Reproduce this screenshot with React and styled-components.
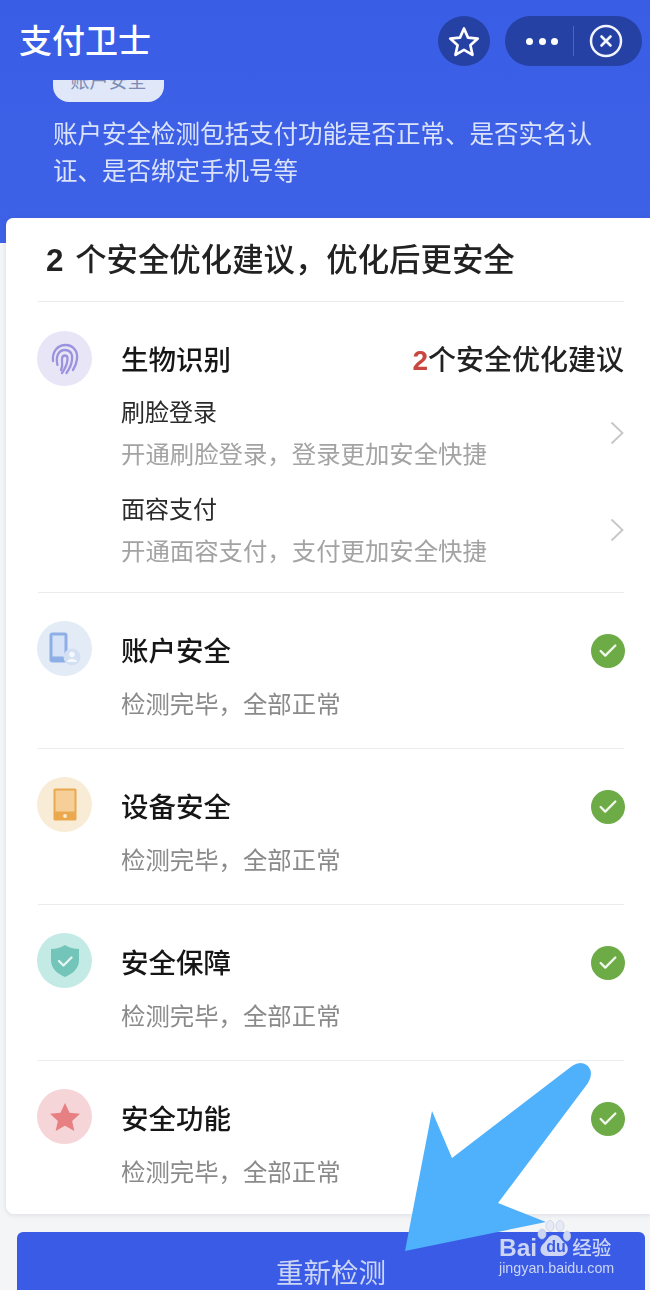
import React from "react";
import styled, { createGlobalStyle } from "styled-components";
import { Check } from "lucide-react";

const GlobalStyle = createGlobalStyle`
  html, body {
    margin: 0;
    padding: 0;
    background: #f4f5f7;
  }
  * {
    box-sizing: border-box;
  }
`;

const okRows = [
  { title: "账户安全", tone: "#e3ebf6", icon: <PhoneUserIcon /> },
  { title: "设备安全", tone: "#f8ecd6", icon: <TabletIcon /> },
  { title: "安全保障", tone: "#c3eae4", icon: <ShieldIcon /> },
  { title: "安全功能", tone: "#f5d5d8", icon: <StarBadgeIcon /> },
];

const suggestions = [
  { name: "刷脸登录", hint: "开通刷脸登录，登录更加安全快捷" },
  { name: "面容支付", hint: "开通面容支付，支付更加安全快捷" },
];

export default function App() {
  return (
    <Page>
      <GlobalStyle />
      <Screen>
        <Hero>
          <TopBar>
            <AppTitle>支付卫士</AppTitle>
            <NavActions>
              <FavButton>
                <svg width="32" height="31" viewBox="0 0 32 31">
                  <path
                    d="M16 2.5 L20 11.6 L29.8 12.6 L22.4 19.2 L24.5 28.8 L16 23.8 L7.5 28.8 L9.6 19.2 L2.2 12.6 L12 11.6 Z"
                    fill="none"
                    stroke="#fff"
                    strokeWidth="2.7"
                    strokeLinejoin="round"
                  />
                </svg>
              </FavButton>
              <Capsule>
                <Dots>
                  <i />
                  <i />
                  <i />
                </Dots>
                <CapsuleLine />
                <svg width="34" height="34" viewBox="0 0 34 34">
                  <circle cx="17" cy="17" r="15" fill="none" stroke="#f2f4ff" strokeWidth="2.5" />
                  <path d="M12.5 12.5 L21.5 21.5 M21.5 12.5 L12.5 21.5" stroke="#f2f4ff" strokeWidth="2.6" strokeLinecap="round" />
                </svg>
              </Capsule>
            </NavActions>
          </TopBar>
          <TagClip>
            <Tag>账户安全</Tag>
          </TagClip>
          <Intro>账户安全检测包括支付功能是否正常、是否实名认证、是否绑定手机号等</Intro>
        </Hero>

        <Card>
          <Heading>
            <b>2</b> 个安全优化建议，优化后更安全
          </Heading>

          <BioSection>
            <IconCircle $tone="#e8e6f6">
              <FingerprintIcon />
            </IconCircle>
            <div>
              <BioHead>
                <RowTitle>生物识别</RowTitle>
                <Count>
                  <em>2</em>个安全优化建议
                </Count>
              </BioHead>
              <Suggestions>
                {suggestions.map((s) => (
                  <Suggestion key={s.name}>
                    <div>
                      <SuggestionName>{s.name}</SuggestionName>
                      <Hint>{s.hint}</Hint>
                    </div>
                    <svg width="14" height="24" viewBox="0 0 14 24">
                      <path d="M1.5 1.5 L12.5 12 L1.5 22.5" fill="none" stroke="#c6c6c6" strokeWidth="1.8" />
                    </svg>
                  </Suggestion>
                ))}
              </Suggestions>
            </div>
          </BioSection>

          {okRows.map((row) => (
            <CheckRow key={row.title}>
              <IconCircle $tone={row.tone}>{row.icon}</IconCircle>
              <RowBody>
                <RowHead>
                  <RowTitle>{row.title}</RowTitle>
                  <OkMark>
                    <Check size={22} strokeWidth={2.6} color="#f2f7ec" />
                  </OkMark>
                </RowHead>
                <Hint $dark>检测完毕，全部正常</Hint>
              </RowBody>
            </CheckRow>
          ))}
        </Card>

        <RetryButton>重新检测</RetryButton>
      </Screen>

      <Arrow viewBox="0 0 650 1290">
        <path
          d="M405 1251 L432 1111 L452 1158 L572 1066 Q581 1060 588 1066 Q594 1073 588 1083 L498 1203 L546 1222 Z"
          fill="#4fb0fb"
        />
      </Arrow>

      <Watermark>
        <LogoLine>
          <LogoBai>Bai</LogoBai>
          <Paw>
            <svg width="34" height="38" viewBox="0 0 34 38">
              <g fill="#e6eaf7" stroke="#c9cdda" strokeWidth="0.7">
                <ellipse cx="5" cy="15" rx="4" ry="5" fill="#ccd5f3" />
                <ellipse cx="13" cy="7" rx="4" ry="5.5" />
                <ellipse cx="23" cy="7" rx="4" ry="5.5" />
                <ellipse cx="30" cy="17" rx="3.6" ry="5" fill="#ccd5f3" />
              </g>
              <path
                d="M17 16 C23 16 24 21 29 25 C33 30 30 37 24 37 L10 37 C4 37 1 30 6 25 C10 22 11 16 17 16 Z"
                fill="#ccd5f3"
              />
            </svg>
            <PawText>du</PawText>
          </Paw>
          <LogoCn>经验</LogoCn>
        </LogoLine>
        <LogoUrl>jingyan.baidu.com</LogoUrl>
      </Watermark>
    </Page>
  );
}

function FingerprintIcon() {
  return (
    <svg width="30" height="32" viewBox="0 0 30 32" fill="none" stroke="#9c93de" strokeWidth="2.3" strokeLinecap="round">
      <path d="M3 18 C2 8 8 2 15.5 2 C23 2 28 8 27 16 C26.5 20 25 24 23 27" />
      <path d="M7.5 22 C5.5 14 8 7 15 7 C21 7 23 12 22 17 C21.5 21 20 25 16.5 30" />
      <path d="M11 27 C13.5 22 11.5 18 12 15.5 C12.5 11.5 17.5 11.5 17.5 15.5 C17.5 20 15.5 25 12 30" />
    </svg>
  );
}

function PhoneUserIcon() {
  return (
    <svg width="32" height="34" viewBox="0 0 32 34">
      <rect x="0.5" y="0.5" width="18" height="30" rx="3" fill="#8eaee6" />
      <rect x="3.5" y="3.5" width="12" height="21" fill="#d6e2f5" />
      <circle cx="23" cy="25" r="8.5" fill="#d3e0f3" />
      <circle cx="23" cy="22.5" r="2.8" fill="#f4f8fd" />
      <path d="M18 30 C18 25.5 28 25.5 28 30 Z" fill="#f4f8fd" />
    </svg>
  );
}

function TabletIcon() {
  return (
    <svg width="24" height="33" viewBox="0 0 24 33">
      <rect x="0.5" y="0.5" width="23" height="32" rx="1.5" fill="#eba94f" />
      <rect x="2.5" y="2.5" width="19" height="21" fill="#f5cf97" />
      <circle cx="12" cy="28" r="1.9" fill="#fbeed6" />
    </svg>
  );
}

function ShieldIcon() {
  return (
    <svg width="30" height="34" viewBox="0 0 30 34">
      <path d="M15 1 C19 3.5 24 5 29 5 L29 16 C29 25 22 30 15 33 C8 30 1 25 1 16 L1 5 C6 5 11 3.5 15 1 Z" fill="#74c5b9" />
      <path d="M9 17 L13.5 21.5 L21.5 13.5" fill="none" stroke="#e6f6f3" strokeWidth="2.3" strokeLinecap="round" strokeLinejoin="round" />
    </svg>
  );
}

function StarBadgeIcon() {
  return (
    <svg width="32" height="30" viewBox="0 0 34 32">
      <path d="M17 1 L21.8 11.4 L33 12.6 L24.6 20.2 L27 31 L17 25.4 L7 31 L9.4 20.2 L1 12.6 L12.2 11.4 Z" fill="#e68083" />
    </svg>
  );
}

const Page = styled.div`
  position: relative;
  width: 650px;
  height: 1290px;
  overflow: hidden;
  background: #f4f5f7;
  font-family: "Liberation Sans", "Noto Sans CJK SC", sans-serif;
`;

const Screen = styled.div`
  filter: blur(0.45px);
`;

const Hero = styled.header`
  height: 243px;
  margin-bottom: -25px;
  background: linear-gradient(180deg, #3a5de6 0%, #3e62e6 100%);
`;

const TopBar = styled.div`
  display: flex;
  align-items: center;
  justify-content: space-between;
  height: 80px;
  padding: 0 8px 0 19px;
`;

const AppTitle = styled.h1`
  margin: 2px 0 0;
  font-size: 33px;
  font-weight: 500;
  line-height: 1;
  color: #fff;
`;

const NavActions = styled.div`
  display: flex;
  align-items: center;
  gap: 15px;
  margin-top: 2px;
`;

const FavButton = styled.div`
  display: flex;
  align-items: center;
  justify-content: center;
  width: 52px;
  height: 50px;
  border-radius: 50%;
  background: #2541a3;
`;

const Capsule = styled.div`
  display: flex;
  align-items: center;
  width: 137px;
  height: 50px;
  padding-left: 21px;
  border-radius: 25px;
  background: #2541a3;
`;

const Dots = styled.div`
  display: flex;
  gap: 5.5px;

  i {
    width: 7px;
    height: 7px;
    border-radius: 50%;
    background: #fff;
  }
`;

const CapsuleLine = styled.div`
  width: 1px;
  height: 30px;
  margin: 0 15px;
  background: rgba(255, 255, 255, 0.2);
`;

const TagClip = styled.div`
  display: flex;
  align-items: flex-end;
  height: 22px;
  overflow: hidden;
  padding-left: 53px;
`;

const Tag = styled.div`
  flex: none;
  width: 111px;
  height: 38px;
  border-radius: 16px;
  background: #dfe7f8;
  font-size: 19px;
  line-height: 36px;
  text-align: center;
  color: #7d8cb5;
`;

const Intro = styled.p`
  width: 552px;
  margin: 14px 0 0 53px;
  font-size: 24.5px;
  line-height: 37px;
  color: #dbe3fb;
`;

const Card = styled.main`
  position: relative;
  margin-left: 6px;
  padding: 0 26px 0 32px;
  background: #fff;
  border-radius: 7px 0 0 8px;
  box-shadow: 0 1px 5px rgba(40, 50, 80, 0.12);
`;

const Heading = styled.h2`
  height: 84px;
  margin: 0;
  padding: 0 0 0 8px;
  border-bottom: 1px solid #ececee;
  font-size: 31.4px;
  font-weight: 500;
  line-height: 85px;
  word-spacing: 3px;
  color: #222;

  b {
    font-weight: 700;
  }
`;

const BioSection = styled.section`
  display: grid;
  grid-template-columns: 55px 1fr;
  column-gap: 29px;
  padding: 29px 0 24px;
  border-bottom: 1px solid #ececee;
`;

const IconCircle = styled.div`
  display: flex;
  align-items: center;
  justify-content: center;
  width: 55px;
  height: 55px;
  margin-left: -1px;
  border-radius: 50%;
  background: ${(p) => p.$tone};
`;

const BioHead = styled.div`
  display: flex;
  align-items: center;
  justify-content: space-between;
  height: 56px;
  padding-top: 1px;
`;

const RowTitle = styled.div`
  height: 36px;
  margin-left: -1px;
  font-size: 27.5px;
  font-weight: 500;
  line-height: 37px;
  color: #161616;
`;

const Count = styled.div`
  height: 36px;
  font-size: 28px;
  font-weight: 500;
  line-height: 37px;
  color: #222;

  em {
    font-style: normal;
    font-weight: 700;
    color: #c8483f;
  }
`;

const Suggestions = styled.div`
  display: flex;
  flex-direction: column;
  gap: 20px;
  margin-top: 7px;
`;

const Suggestion = styled.div`
  display: flex;
  align-items: center;
  justify-content: space-between;
`;

const SuggestionName = styled.div`
  height: 36px;
  margin: 0 0 5px -1px;
  font-size: 24px;
  line-height: 38px;
  color: #2a2a2a;
`;

const Hint = styled.div`
  height: 36px;
  margin-left: -1px;
  font-size: 24.4px;
  line-height: 39px;
  color: ${(p) => (p.$dark ? "#8a8a8a" : "#a3a3a3")};
`;

const CheckRow = styled.section`
  display: grid;
  grid-template-columns: 55px 1fr;
  column-gap: 29px;
  padding: 28px 0 27px;
  border-bottom: 1px solid #ececee;

  &:last-child {
    padding-bottom: 25px;
    border-bottom: 0;
  }
`;

const RowBody = styled.div`
  padding-top: 12px;
`;

const RowHead = styled.div`
  display: flex;
  align-items: center;
  justify-content: space-between;
  height: 36px;
  margin-bottom: 16px;
`;

const OkMark = styled.div`
  display: flex;
  align-items: center;
  justify-content: center;
  width: 34px;
  height: 34px;
  margin-right: -1px;
  border-radius: 50%;
  background: #6cab45;
`;

const RetryButton = styled.div`
  width: 628px;
  height: 58px;
  margin: 18px 0 0 17px;
  padding-top: 26px;
  border-radius: 6px 6px 0 0;
  background: #3a5be6;
  font-size: 27.5px;
  line-height: 32px;
  text-align: center;
  color: #cdd6f5;
`;

const Arrow = styled.svg`
  position: absolute;
  inset: 0;
  width: 650px;
  height: 1290px;
  pointer-events: none;
`;

const Watermark = styled.div`
  position: absolute;
  left: 499px;
  top: 1219px;
  width: 120px;
  color: #ccd5f3;
  font-family: "Liberation Sans", sans-serif;
`;

const LogoLine = styled.div`
  display: flex;
  align-items: flex-end;
  height: 38px;
`;

const LogoBai = styled.span`
  margin-bottom: -5px;
  font-size: 24.5px;
  font-weight: 700;
  line-height: 28px;
`;

const Paw = styled.div`
  position: relative;
  display: flex;
  flex: none;
`;

const PawText = styled.span`
  position: absolute;
  left: 9px;
  bottom: 1px;
  font-size: 16px;
  font-weight: 700;
  line-height: 18px;
  color: #3a5be6;
`;

const LogoCn = styled.span`
  flex: none;
  margin: 0 0 -3px 1px;
  font-family: "Noto Sans CJK SC", sans-serif;
  font-size: 19.5px;
  font-weight: 500;
  line-height: 26px;
`;

const LogoUrl = styled.div`
  margin-top: 2px;
  font-size: 14.3px;
  line-height: 18px;
  white-space: nowrap;
`;
